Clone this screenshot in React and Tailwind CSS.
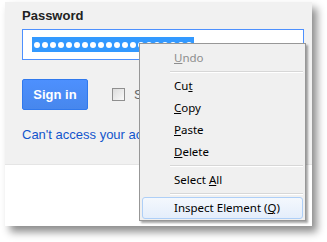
import React from "react";

const menuFont = { fontFamily: '"Noto Sans", "Open Sans", sans-serif' };

function Item({ children, disabled, active }) {
    return (
        <div
            className={
                "flex h-[22px] items-center rounded-[3px] border pl-[31px] text-[11.5px] " +
                (active
                    ? "border-[#aecff7] bg-gradient-to-b from-[#f4f8fd] to-[#e4eefb] text-black"
                    : "border-transparent " + (disabled ? "text-[#8d8d8d]" : "text-black"))
            }
        >
            <span className="whitespace-pre">{children}</span>
        </div>
    );
}

function Sep() {
    return (
        <div className="flex h-[6px] items-center pl-[28px]">
            <div className="h-[2px] w-full border-t border-[#d7d7d7] border-b border-b-white" />
        </div>
    );
}

function ContextMenu() {
    return (
        <div
            className="absolute left-[139px] top-[43px] w-[167px] border border-[#979797] bg-[#f0f0f0] px-[2px] pt-[3px] pb-[1px] shadow-[2px_2px_2px_rgba(0,0,0,0.35)]"
            style={menuFont}
        >
            <Item disabled>
                <u>U</u>ndo
            </Item>
            <Sep />
            <Item>
                Cu<u>t</u>
            </Item>
            <Item>
                <u>C</u>opy
            </Item>
            <Item>
                <u>P</u>aste
            </Item>
            <Item>
                <u>D</u>elete
            </Item>
            <Sep />
            <Item>
                {"Select "}<u>A</u>ll
            </Item>
            <Sep />
            <Item active>
                {"Inspect Element ("}<u>Q</u>)
            </Item>
        </div>
    );
}

export default function App() {
    const dots = Array.from({ length: 20 });

    return (
        <div
            className="relative h-[242px] w-[327px] overflow-hidden bg-white"
            style={{ fontFamily: '"Liberation Sans", Arial, sans-serif' }}
        >
            <div className="ml-[5px] mt-[2px] flex h-[224px] w-[307px] flex-col bg-white shadow-[5px_6px_8px_rgba(0,0,0,0.45)]">
                <div className="h-[163px] border-b border-[#e5e5e5] bg-[#f1f1f1] pl-[17px] pr-[8px] pt-[6px]">
                    <div className="text-[13px] font-bold leading-[16px] text-[#222]">Password</div>
                    <div className="mt-[5px] flex h-[31px] items-center border border-[#4d90fe] bg-white pl-[9px]">
                        <div className="flex h-[15px] items-center gap-[2px] bg-[#3399ff] px-[2px]">
                            {dots.map((_, i) => (
                                <div key={i} className="h-[6px] w-[6px] rounded-full bg-white" />
                            ))}
                        </div>
                    </div>
                    <div className="mt-[19px] flex items-center">
                        <button className="h-[31px] w-[66px] rounded-[2px] border border-[#3079ed] bg-gradient-to-b from-[#4d90fe] to-[#4787ed] text-[13px] font-bold text-white">
                            Sign in
                        </button>
                        <div className="ml-[24px] h-[13px] w-[13px] border border-[#8f8f8f] bg-gradient-to-br from-[#dcdcdc] to-[#fafafa]" />
                        <span className="ml-[9px] text-[13px] text-[#666]">Stay signed in</span>
                    </div>
                    <div className="mt-[17px] text-[13px] leading-[16px] text-[#15c]">Can't access your account?</div>
                </div>
            </div>
            <ContextMenu />
        </div>
    );
}
